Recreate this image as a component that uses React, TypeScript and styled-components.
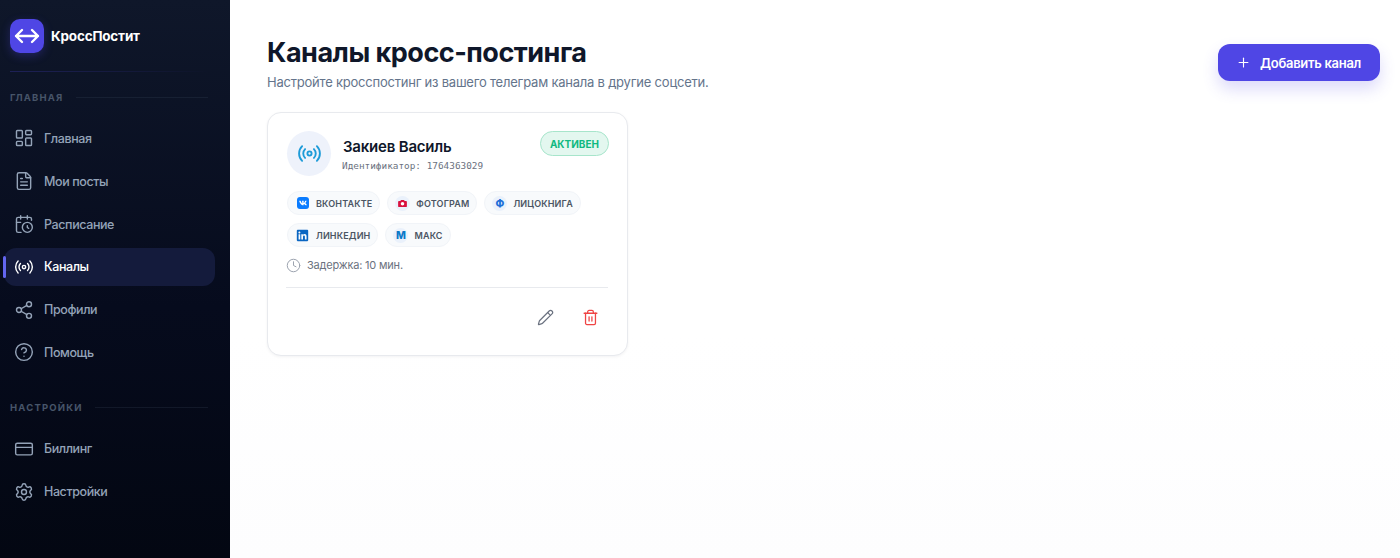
import { FC, ReactNode } from "react";
import styled, { createGlobalStyle } from "styled-components";
import {
  CalendarClock,
  CircleHelp,
  Clock,
  CreditCard,
  FileText,
  LayoutDashboard,
  LucideIcon,
  Pencil,
  Plus,
  Radio,
  Settings,
  Share2,
  Trash2,
} from "lucide-react";
import { FaLinkedin, FaVk } from "react-icons/fa";

const GlobalStyle = createGlobalStyle`
  html, body {
    margin: 0;
    padding: 0;
    height: 100%;
  }
  body {
    font-family: "Inter", "Noto Sans", sans-serif;
    background: #ffffff;
    overflow: hidden;
  }
  #root {
    height: 100%;
  }
  * {
    box-sizing: border-box;
  }
`;

type NavEntry = { label: string; Icon: LucideIcon; active?: boolean };

const MAIN_NAV: NavEntry[] = [
  { label: "Главная", Icon: LayoutDashboard },
  { label: "Мои посты", Icon: FileText },
  { label: "Расписание", Icon: CalendarClock },
  { label: "Каналы", Icon: Radio, active: true },
  { label: "Профили", Icon: Share2 },
  { label: "Помощь", Icon: CircleHelp },
];

const SETTINGS_NAV: NavEntry[] = [
  { label: "Биллинг", Icon: CreditCard },
  { label: "Настройки", Icon: Settings },
];

const App = () => (
  <Page>
    <GlobalStyle />
    <Sidebar>
      <Brand>
        <LogoMark>
          <svg width="26" height="18" viewBox="0 0 26 18" fill="none" stroke="#fff" strokeWidth="2.4" strokeLinecap="round" strokeLinejoin="round">
            <path d="M2 9h22M8 3 2 9l6 6M18 3l6 6-6 6" />
          </svg>
        </LogoMark>
        <BrandName>КроссПостит</BrandName>
      </Brand>
      <BrandRule />
      <NavSection title="Главная" items={MAIN_NAV} />
      <SettingsGap />
      <NavSection title="Настройки" items={SETTINGS_NAV} />
    </Sidebar>

    <Main>
      <Header>
        <div>
          <Title>Каналы кросс-постинга</Title>
          <Subtitle>Настройте кросспостинг из вашего телеграм канала в другие соцсети.</Subtitle>
        </div>
        <AddButton>
          <Plus size={15} strokeWidth={1.8} />
          Добавить канал
        </AddButton>
      </Header>

      <Card>
        <CardTop>
          <Avatar>
            <Radio size={25} strokeWidth={1.8} />
          </Avatar>
          <CardIdentity>
            <ChannelName>Закиев Василь</ChannelName>
            <ChannelId>Идентификатор: 1764363029</ChannelId>
          </CardIdentity>
          <StatusBadge>АКТИВЕН</StatusBadge>
        </CardTop>

        <Chips>
          <Chip icon={<VkIcon />}>ВКОНТАКТЕ</Chip>
          <Chip
            icon={
              <LetterDot $color="#d9123f">
                <svg width="9" height="7" viewBox="0 0 10 8">
                  <path
                    fill="currentColor"
                    d="M3.2 0h3.6l.6 1H9a1 1 0 0 1 1 1v5a1 1 0 0 1-1 1H1a1 1 0 0 1-1-1V2a1 1 0 0 1 1-1h1.6z"
                  />
                  <circle cx="5" cy="4.4" r="2" fill="#fff" />
                </svg>
              </LetterDot>
            }
          >
            ФОТОГРАМ
          </Chip>
          <Chip icon={<LetterDot $color="#1d6fd8">Ф</LetterDot>}>ЛИЦОКНИГА</Chip>
          <Chip icon={<LinkedinIcon />}>ЛИНКЕДИН</Chip>
          <Chip icon={<LetterDot $color="#0a78c8">М</LetterDot>}>МАКС</Chip>
        </Chips>

        <Delay>
          <Clock size={15} strokeWidth={1.6} />
          Задержка: 10 мин.
        </Delay>

        <CardActions>
          <IconButton $color="#6b7280">
            <Pencil size={17} strokeWidth={1.7} />
          </IconButton>
          <IconButton $color="#ef4444">
            <Trash2 size={17} strokeWidth={1.8} />
          </IconButton>
        </CardActions>
      </Card>
    </Main>
  </Page>
);

const NavSection: FC<{ title: string; items: NavEntry[] }> = ({ title, items }) => (
  <>
    <SectionLabel>{title}</SectionLabel>
    <NavList>
      {items.map(({ label, Icon, active }) => (
        <NavItem key={label} $active={active}>
          <Icon size={20} strokeWidth={1.7} />
          {label}
        </NavItem>
      ))}
    </NavList>
  </>
);

const Chip: FC<{ icon: ReactNode; children: ReactNode }> = ({ icon, children }) => (
  <ChipWrapper>
    <ChipIcon>{icon}</ChipIcon>
    {children}
  </ChipWrapper>
);

const Page = styled.div`
  display: flex;
  height: 558px;
`;

const Sidebar = styled.aside`
  flex: 0 0 230px;
  padding: 19px 0 0;
  background: linear-gradient(180deg, #0f172a 0%, #060b1d 55%, #030712 100%);
`;

const Brand = styled.div`
  display: flex;
  align-items: center;
  gap: 7px;
  padding-left: 10px;
`;

const LogoMark = styled.div`
  display: flex;
  align-items: center;
  justify-content: center;
  width: 34px;
  height: 34px;
  border-radius: 10px;
  background: #4f46e5;
  box-shadow: 0 3px 10px rgba(79, 70, 229, 0.3);
`;

const BrandName = styled.span`
  color: #ffffff;
  font-size: 13.5px;
  font-weight: 700;
  letter-spacing: -0.2px;
`;

const BrandRule = styled.div`
  height: 1px;
  margin: 18px 20px 0 10px;
  background: linear-gradient(90deg, rgba(79, 70, 229, 0.25), rgba(79, 70, 229, 0));
`;

const SectionLabel = styled.div`
  display: flex;
  align-items: center;
  gap: 12px;
  height: 12px;
  margin: 19px 22px 0 10px;
  color: #475569;
  font-size: 9.5px;
  font-weight: 700;
  letter-spacing: 1.2px;
  text-transform: uppercase;

  &::after {
    content: "";
    flex: 1;
    height: 1px;
    background: rgba(71, 85, 105, 0.2);
  }
`;

const NavList = styled.nav`
  display: flex;
  flex-direction: column;
  gap: 5px;
  margin-top: 16.6px;
`;

const NavItem = styled.a<{ $active?: boolean }>`
  position: relative;
  display: flex;
  align-items: center;
  gap: 10px;
  height: 37.8px;
  margin: 0 15px 0 4px;
  padding-left: 10px;
  border-radius: 12px;
  font-size: 12.5px;
  font-weight: 500;
  letter-spacing: -0.4px;
  color: ${({ $active }) => ($active ? "#ffffff" : "#94a3b8")};
  background: ${({ $active }) => ($active ? "#141b3c" : "transparent")};

  ${({ $active }) =>
    $active &&
    `&::before {
      content: "";
      position: absolute;
      left: -1px;
      top: 8px;
      bottom: 8px;
      width: 3px;
      border-radius: 2px;
      background: #6366f1;
    }`}
`;

const SettingsGap = styled.div`
  height: 11px;
`;

const Main = styled.main`
  flex: 1;
  min-width: 0;
  padding: 36px 20px 0 37px;
  background: linear-gradient(180deg, #ffffff 60%, #fdfdfe 100%);
`;

const Header = styled.header`
  display: flex;
  align-items: flex-start;
  justify-content: space-between;
`;

const Title = styled.h1`
  margin: 0;
  color: #0f172a;
  font-size: 27px;
  line-height: 33px;
  font-weight: 700;
  letter-spacing: -0.5px;
`;

const Subtitle = styled.p`
  margin: 4px 0 0;
  color: #64748b;
  font-size: 13px;
  line-height: 18px;
  letter-spacing: -0.22px;
`;

const AddButton = styled.button`
  display: flex;
  align-items: center;
  gap: 9px;
  height: 37px;
  margin-top: 8px;
  padding: 0 19px 0 18px;
  border: 0;
  border-radius: 12px;
  background: #4f46e5;
  box-shadow: 0 8px 16px rgba(79, 70, 229, 0.2);
  color: #ffffff;
  font-family: inherit;
  font-size: 13px;
  font-weight: 600;
  letter-spacing: -0.3px;
`;

const Card = styled.section`
  width: 361px;
  height: 244px;
  margin-top: 21px;
  padding: 18px 19px;
  border: 1px solid #e8eaee;
  border-radius: 14px;
  background: #ffffff;
  box-shadow: 0 1px 3px rgba(15, 23, 42, 0.05);
`;

const CardTop = styled.div`
  display: flex;
  align-items: flex-start;
  gap: 12px;
`;

const Avatar = styled.div`
  display: flex;
  align-items: center;
  justify-content: center;
  flex: 0 0 44px;
  height: 45px;
  border-radius: 50%;
  background: #eef2fb;
  color: #1d9bd8;
`;

const CardIdentity = styled.div`
  flex: 1;
  padding-top: 6px;
`;

const ChannelName = styled.div`
  color: #0f172a;
  font-size: 15px;
  line-height: 20px;
  font-weight: 600;
  letter-spacing: -0.2px;
`;

const ChannelId = styled.div`
  margin: 2px 0 0 -1px;
  color: #6b7280;
  font-family: "DejaVu Sans Mono", "Liberation Mono", monospace;
  font-size: 9.4px;
  line-height: 13px;
`;

const StatusBadge = styled.span`
  display: flex;
  align-items: center;
  height: 25px;
  margin-right: -1px;
  padding: 0 9px;
  border: 1px solid #a7e5cb;
  border-radius: 13px;
  background: #e3f7ef;
  color: #10b981;
  font-size: 10px;
  font-weight: 700;
`;

const Chips = styled.div`
  display: flex;
  flex-wrap: wrap;
  gap: 8px 7px;
  margin-top: 15px;
`;

const ChipWrapper = styled.span`
  display: flex;
  align-items: center;
  gap: 6px;
  height: 24px;
  padding: 0 7px;
  border: 1px solid #f1f4f8;
  border-radius: 12px;
  background: #f8fafc;
  color: #4b5563;
  font-size: 9px;
  font-weight: 600;
  letter-spacing: 0.15px;
`;

const ChipIcon = styled.span`
  display: flex;
  align-items: center;
  justify-content: center;
  width: 15px;
`;

const VkIcon = styled(FaVk)`
  width: 12px;
  height: 12px;
  padding: 2px;
  border-radius: 3px;
  background: #0a7cff;
  color: #ffffff;
`;

const LinkedinIcon = styled(FaLinkedin)`
  width: 13px;
  height: 13px;
  color: #0a66c2;
`;

const LetterDot = styled.span<{ $color: string }>`
  display: flex;
  align-items: center;
  justify-content: center;
  width: 15px;
  height: 15px;
  border-radius: 50%;
  background: #eaf1fb;
  color: ${({ $color }) => $color};
  font-size: 10.5px;
  font-weight: 800;
`;

const Delay = styled.div`
  display: flex;
  align-items: center;
  gap: 6px;
  margin: 10px 0 0 -1px;
  padding-bottom: 14px;
  border-bottom: 1px solid #e8eaee;
  color: #6b7280;
  font-size: 11px;
  line-height: 16px;
  letter-spacing: -0.2px;

  svg {
    color: #9ca3af;
  }
`;

const CardActions = styled.div`
  display: flex;
  justify-content: flex-end;
  gap: 28px;
  margin-top: 21px;
  padding-right: 9px;
`;

const IconButton = styled.span<{ $color: string }>`
  display: flex;
  color: ${({ $color }) => $color};
`;

export default App;
